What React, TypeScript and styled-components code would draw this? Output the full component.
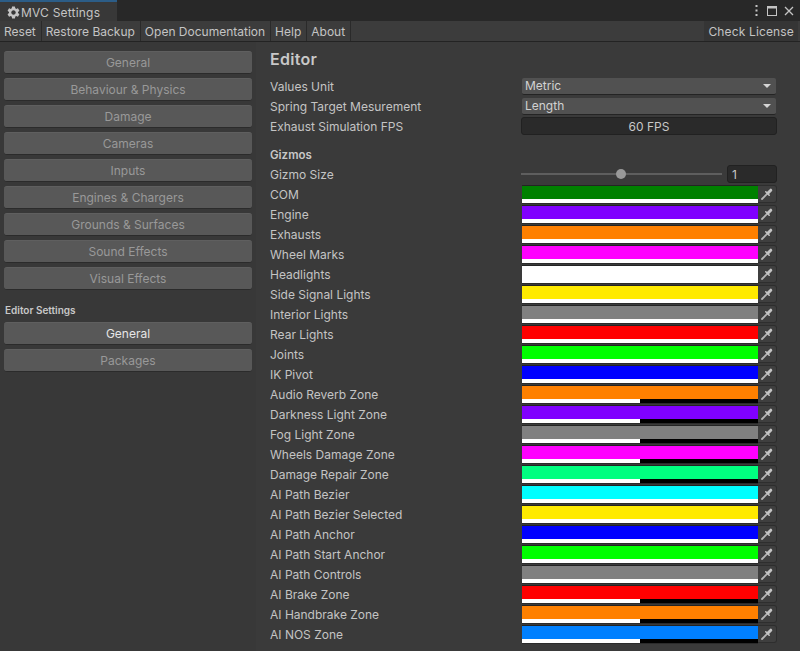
import React from "react";
import styled, { createGlobalStyle } from "styled-components";
import { MdSettings } from "react-icons/md";

const GlobalStyle = createGlobalStyle`
  html, body {
    margin: 0;
    padding: 0;
    height: 100%;
    background: #383838;
    overflow: hidden;
  }
  body {
    font-family: Inter, "Liberation Sans", sans-serif;
    font-size: 12px;
    color: #c4c4c4;
  }
`;

const Window = styled.div`
  width: 800px;
  height: 651px;
  display: flex;
  flex-direction: column;
  overflow: hidden;
`;

const TabBar = styled.div`
  height: 21px;
  flex: none;
  display: flex;
  justify-content: space-between;
  background: #282828;
  box-sizing: border-box;
`;

const Tab = styled.div`
  width: 117px;
  box-sizing: border-box;
  display: flex;
  align-items: center;
  padding: 1px 0 0 6px;
  background: #383838;
  border-top: 2px solid #2c5d87;
  font-size: 12px;
  color: #c4c4c4;
  letter-spacing: 0.2px;
`;

const WindowIcons = styled.div`
  display: flex;
  align-items: center;
  gap: 7px;
  padding: 0 6px 0 0;
  svg {
    display: block;
  }
`;

const Toolbar = styled.div`
  height: 21px;
  flex: none;
  display: flex;
  justify-content: space-between;
  box-sizing: border-box;
  background: #3c3c3c;
  border-bottom: 1px solid #232323;
`;

const ToolGroup = styled.div`
  display: flex;
`;

const ToolButton = styled.div`
  display: flex;
  align-items: center;
  padding: 0 5px 0 4px;
  border-right: 1px solid #2a2a2a;
  color: #c4c4c4;
  font-size: 12px;
`;

const LicenseButton = styled.div`
  display: flex;
  align-items: center;
  margin-right: 2px;
  padding: 0 4px;
  background: #353535;
  color: #c4c4c4;
  font-size: 12px;
  letter-spacing: 0.15px;
`;

const Body = styled.div`
  flex: 1;
  display: flex;
  min-height: 0;
`;

const Sidebar = styled.div`
  width: 256px;
  flex: none;
  box-sizing: border-box;
  padding: 9px 4px 0;
  display: flex;
  flex-direction: column;
  gap: 4px;
  background: #383838;
`;

const NavButton = styled.div<{ $selected?: boolean }>`
  height: 21px;
  display: flex;
  align-items: center;
  justify-content: center;
  border-radius: 3px;
  background: #585858;
  border-bottom: 1px solid #2b2b2b;
  border-top: 1px solid #5f5f5f;
  color: ${(p) => (p.$selected ? "#e6e6e6" : "#999999")};
  font-size: 12px;
`;

const SideHeading = styled.div`
  margin: 8px 0 0 1px;
  height: 16px;
  line-height: 16px;
  font-size: 10px;
  font-weight: 600;
  color: #c8c8c8;
`;

const Content = styled.div`
  flex: 1;
  box-sizing: border-box;
  padding: 6px 23px 0 14px;
  background: #3a3a3a;
`;

const Title = styled.div`
  height: 24px;
  line-height: 22px;
  font-size: 16px;
  font-weight: 600;
  letter-spacing: 0.3px;
  color: #c8c8c8;
  margin-bottom: 4px;
`;

const Row = styled.div`
  height: 20px;
  display: grid;
  grid-template-columns: 251px 1fr;
  align-items: center;
`;

const Label = styled.div`
  color: #c4c4c4;
  font-size: 12px;
`;

const Section = styled.div`
  height: 16px;
  line-height: 16px;
  margin-top: 11px;
  margin-bottom: 1px;
  font-size: 11.5px;
  font-weight: 600;
  color: #c8c8c8;
`;

const Dropdown = styled.div`
  height: 17px;
  margin-right: 1px;
  margin-left: 1px;
  box-sizing: border-box;
  display: flex;
  align-items: center;
  justify-content: space-between;
  padding: 0 5px 0 3px;
  background: #515151;
  border-bottom: 1px solid #242424;
  border-radius: 2px;
  color: #d2d2d2;
`;

const Caret = styled.span`
  width: 0;
  height: 0;
  border-left: 4px solid transparent;
  border-right: 4px solid transparent;
  border-top: 4px solid #d4d4d4;
`;

const ReadOnly = styled.div`
  height: 18px;
  box-sizing: border-box;
  display: flex;
  align-items: center;
  justify-content: center;
  background: #2a2a2a;
  border: 1px solid #212121;
  border-radius: 3px;
  color: #c8c8c8;
`;

const SliderRow = styled.div`
  display: flex;
  align-items: center;
  gap: 5px;
`;

const SliderTrack = styled.div`
  position: relative;
  width: 201px;
  height: 2px;
  background: #5e5e5e;
`;

const SliderThumb = styled.div`
  position: absolute;
  left: 95px;
  top: -4px;
  width: 10px;
  height: 10px;
  border-radius: 50%;
  background: #999;
`;

const NumberInput = styled.div`
  width: 50px;
  height: 18px;
  box-sizing: border-box;
  display: flex;
  align-items: center;
  padding-left: 4px;
  background: #2a2a2a;
  border: 1px solid #212121;
  border-radius: 3px;
  color: #c8c8c8;
`;

const ColorField = styled.div`
  display: flex;
  height: 19px;
`;

const Swatch = styled.div`
  width: 236px;
  margin-left: 1px;
  height: 18px;
  box-sizing: border-box;
  border-top: 1px solid #242424;
  box-shadow: 0 1px 0 #2b2b2b;
  background: #000;
`;

const SwatchColor = styled.div<{ $color: string }>`
  height: 13px;
  background: ${(p) => p.$color};
`;

const AlphaBar = styled.div<{ $half?: boolean }>`
  height: 4px;
  width: ${(p) => (p.$half ? "118px" : "100%")};
  background: #fff;
`;

const PickerButton = styled.div`
  width: 19px;
  height: 18px;
  box-sizing: border-box;
  display: flex;
  align-items: center;
  justify-content: center;
  background: #3f3f3f;
  border: 1px solid #2e2e2e;
  border-left: none;
  border-radius: 0 3px 3px 0;
`;

const navItems = [
  "General",
  "Behaviour & Physics",
  "Damage",
  "Cameras",
  "Inputs",
  "Engines & Chargers",
  "Grounds & Surfaces",
  "Sound Effects",
  "Visual Effects",
];

const gizmoColors: { label: string; color: string; half?: boolean }[] = [
  { label: "COM", color: "#008000" },
  { label: "Engine", color: "#8000ff" },
  { label: "Exhausts", color: "#ff8000" },
  { label: "Wheel Marks", color: "#ff00ff" },
  { label: "Headlights", color: "#ffffff" },
  { label: "Side Signal Lights", color: "#ffea00" },
  { label: "Interior Lights", color: "#808080" },
  { label: "Rear Lights", color: "#ff0000" },
  { label: "Joints", color: "#00ff00" },
  { label: "IK Pivot", color: "#0000ff" },
  { label: "Audio Reverb Zone", color: "#ff8000", half: true },
  { label: "Darkness Light Zone", color: "#8000ff", half: true },
  { label: "Fog Light Zone", color: "#808080", half: true },
  { label: "Wheels Damage Zone", color: "#ff00ff", half: true },
  { label: "Damage Repair Zone", color: "#00ff80", half: true },
  { label: "AI Path Bezier", color: "#00ffff" },
  { label: "AI Path Bezier Selected", color: "#ffea00" },
  { label: "AI Path Anchor", color: "#0000ff" },
  { label: "AI Path Start Anchor", color: "#00ff00" },
  { label: "AI Path Controls", color: "#808080" },
  { label: "AI Brake Zone", color: "#ff0000", half: true },
  { label: "AI Handbrake Zone", color: "#ff8000", half: true },
  { label: "AI NOS Zone", color: "#0080ff", half: true },
];

function Eyedropper() {
  return (
    <svg width="12" height="12" viewBox="0 0 12 12" fill="none" strokeLinecap="round">
      <path d="M1 11 L5.8 6.2" stroke="#b4b4b4" strokeWidth="1.8" />
      <path d="M4.8 3.8 L8.2 7.2" stroke="#c4c4c4" strokeWidth="1.6" />
      <path d="M7 5 L9.8 2.2" stroke="#c4c4c4" strokeWidth="3" />
    </svg>
  );
}

export default function App() {
  return (
    <Window>
      <GlobalStyle />
      <TabBar>
        <Tab>
          <MdSettings size={15} color="#c4c4c4" />
          MVC Settings
        </Tab>
        <WindowIcons>
          <svg width="3" height="11" viewBox="0 0 3 11">
            <rect x="0.5" y="0" width="2" height="2" fill="#c4c4c4" />
            <rect x="0.5" y="4.5" width="2" height="2" fill="#c4c4c4" />
            <rect x="0.5" y="9" width="2" height="2" fill="#c4c4c4" />
          </svg>
          <svg width="10" height="10" viewBox="0 0 10 10" style={{ marginLeft: 2 }}>
            <rect x="0.5" y="0.5" width="9" height="9" fill="none" stroke="#c4c4c4" />
            <rect x="0" y="0" width="10" height="2.5" fill="#c4c4c4" />
          </svg>
          <svg width="10" height="10" viewBox="0 0 10 10">
            <path d="M1 1 L9 9 M9 1 L1 9" stroke="#c4c4c4" strokeWidth="1.3" />
          </svg>
        </WindowIcons>
      </TabBar>
      <Toolbar>
        <ToolGroup>
          <ToolButton>Reset</ToolButton>
          <ToolButton>Restore Backup</ToolButton>
          <ToolButton>Open Documentation</ToolButton>
          <ToolButton>Help</ToolButton>
          <ToolButton>About</ToolButton>
        </ToolGroup>
        <LicenseButton>Check License</LicenseButton>
      </Toolbar>
      <Body>
        <Sidebar>
          {navItems.map((item) => (
            <NavButton key={item}>{item}</NavButton>
          ))}
          <SideHeading>Editor Settings</SideHeading>
          <NavButton $selected>General</NavButton>
          <NavButton>Packages</NavButton>
        </Sidebar>
        <Content>
          <Title>Editor</Title>
          <Row>
            <Label>Values Unit</Label>
            <Dropdown>
              Metric
              <Caret />
            </Dropdown>
          </Row>
          <Row>
            <Label>Spring Target Mesurement</Label>
            <Dropdown>
              Length
              <Caret />
            </Dropdown>
          </Row>
          <Row>
            <Label>Exhaust Simulation FPS</Label>
            <ReadOnly>60 FPS</ReadOnly>
          </Row>
          <Section>Gizmos</Section>
          <Row>
            <Label>Gizmo Size</Label>
            <SliderRow>
              <SliderTrack>
                <SliderThumb />
              </SliderTrack>
              <NumberInput>1</NumberInput>
            </SliderRow>
          </Row>
          {gizmoColors.map((g) => (
            <Row key={g.label}>
              <Label>{g.label}</Label>
              <ColorField>
                <Swatch>
                  <SwatchColor $color={g.color} />
                  <AlphaBar $half={g.half} />
                </Swatch>
                <PickerButton>
                  <Eyedropper />
                </PickerButton>
              </ColorField>
            </Row>
          ))}
        </Content>
      </Body>
    </Window>
  );
}
